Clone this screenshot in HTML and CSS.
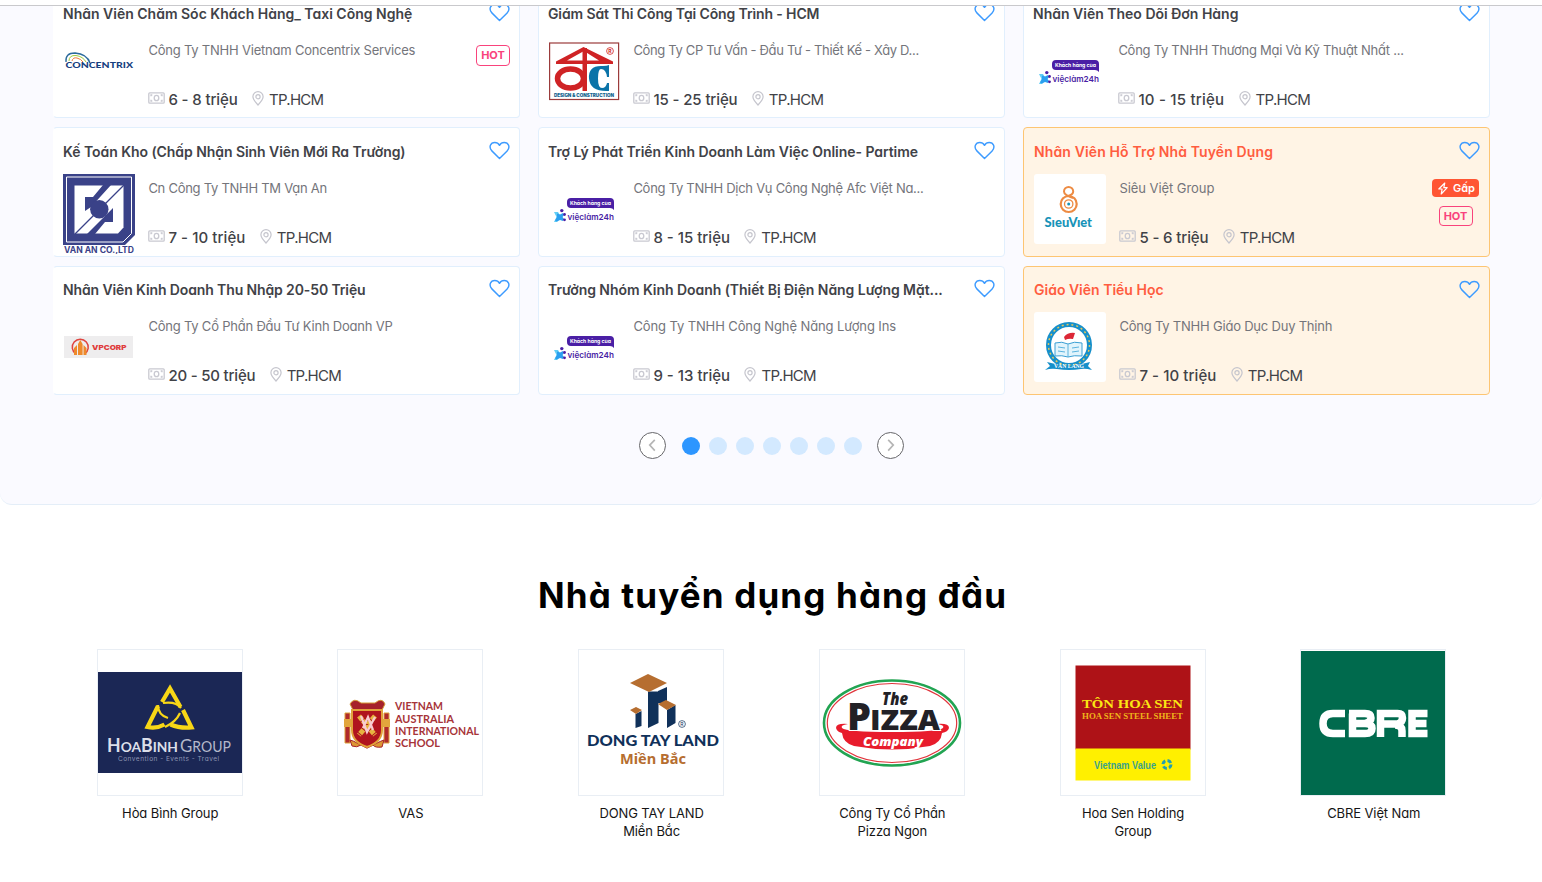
FILE: index.html
```html
<!DOCTYPE html>
<html lang="vi">
<head>
<meta charset="utf-8">
<title>Nhà tuyển dụng hàng đầu</title>
<link rel="stylesheet" href="styles.css">
</head>
<body>
<svg class="sprite" aria-hidden="true">
  <symbol id="heart" viewBox="0 0 22 19"><path d="M11 17.8 3 9.9C-.6 6.2 1.5 1.1 6.1 1.1c2.200 0 3.900 1.200 4.900 3 1-1.800 2.700-3 4.900-3 4.600 0 6.700 5.100 3.100 8.800z" fill="none" stroke="#3d9bff" stroke-width="1.500" stroke-linejoin="round"/></symbol>
  <symbol id="money" viewBox="0 0 17 12"><g fill="none" stroke="#c9c9d1" stroke-width="1.300"><rect x=".8" y=".8" width="15.400" height="10.400" rx="1"/><ellipse cx="8.500" cy="6" rx="2.300" ry="2.700"/><path d="M3 4.200V3h1.300M12.700 3H14v1.200M3 7.800V9h1.300M12.700 9H14V7.800"/></g></symbol>
  <symbol id="pin" viewBox="0 0 12 15"><g fill="none" stroke="#c5c5cd" stroke-width="1.200"><path d="M6 14C3 10.800.9 8.500.9 5.800a5.100 5.100 0 0 1 10.200 0C11.100 8.500 9 10.800 6 14z"/><circle cx="6" cy="5.700" r="2.100"/></g></symbol>
  <symbol id="vl24" viewBox="0 0 72 80">
    <path d="M23 24h39q4 0 4 4v8q-1.500-2-4-2H23q-4 0-4-4v-2q0-4 4-4z" fill="#4a1fa5"/>
    <text x="22" y="31" font-family="Inter" font-size="5.400" font-weight="700" fill="#fff" textLength="41" lengthAdjust="spacingAndGlyphs">Khách hàng của</text>
    <path d="M6 38l4 0 3 5-4 5H6l2.500-5z" fill="#60cdf5"/><path d="M9 39.500l3 1 3-1.500 1 2-1.500 2 1.500 2-1 2-3-1-3 1.500-2-1 2-3.500z" fill="#2b9fef"/>
    <circle cx="13.800" cy="36.600" r="1.700" fill="#4a1fa5"/><circle cx="16.500" cy="40.500" r="1.400" fill="#4a1fa5"/><circle cx="16.500" cy="45.800" r="1.400" fill="#4a1fa5"/>
    <text x="19.500" y="46" font-family="Inter" font-size="8.200" font-weight="600" fill="#4a1fa5" textLength="46.500" lengthAdjust="spacingAndGlyphs">việclàm24h</text>
  </symbol>
</svg>

<header class="topbar"></header>

<section class="jobs">
  <div class="job-grid">
    <article class="job">
      <div class="job-head"><h3 class="job-title">Nhân Viên Chăm Sóc Khách Hàng_ Taxi Công Nghệ</h3><svg class="heart"><use href="#heart"/></svg></div>
      <div class="job-body">
        <svg class="logo" viewBox="0 0 72 80">
          <g fill="none"><path d="M3 26q-1-9 9-9 12 1 15 10" stroke="#2a6a9c" stroke-width="1.300"/><path d="M6 25q0-6 7-5.500 7 1 10 6.500" stroke="#9ecb3c"/><path d="M9 25q1-4 5-3 4 1 6 4" stroke="#ee7b35"/></g>
          <text x="2.500" y="32" font-family="Lato" font-size="8" font-weight="900" fill="#173f7f" textLength="67.500" lengthAdjust="spacingAndGlyphs">CONCENTRIX</text>
        </svg>
        <div class="info"><p class="company tight">Công Ty TNHH Vietnam Concentrix Services</p><p class="meta"><svg class="money"><use href="#money"/></svg><b class="close">6 - 8 triệu</b><svg class="pin"><use href="#pin"/></svg><span>TP.HCM</span></p></div>
        <div class="badges single"><span class="hot">HOT</span></div>
      </div>
    </article>
    <article class="job">
      <div class="job-head"><h3 class="job-title tight">Giám Sát Thi Công Tại Công Trình - HCM</h3><svg class="heart"><use href="#heart"/></svg></div>
      <div class="job-body">
        <svg class="logo" viewBox="0 0 72 80">
          <rect x="1.600" y="7" width="69" height="56.500" fill="#fff" stroke="#9b3b3b" stroke-width="1.200"/>
          <path d="M8 25.500 35.500 11 65 25.500v2.500H8zM19 24.500h32L36 15z" fill="#cf2325" fill-rule="evenodd"/><path d="M34.500 12h4.500v43h-4.500z" fill="#cf2325"/>
          <ellipse cx="22.500" cy="42.500" rx="13" ry="9.500" fill="none" stroke="#cf2325" stroke-width="5.500"/>
          <path d="M61 29v12h-2q-1-8-6-8-3 0-3 9.500T54 52q4 0 5-5h2v8q-19 1-20-12.500T55 30q4 0 6-1z" fill="#0a73a8"/>
          <circle cx="62" cy="15" r="3.400" fill="none" stroke="#cf2325" stroke-width=".8"/><text x="60.200" y="17" font-family="Inter" font-size="5" font-weight="700" fill="#cf2325">R</text>
          <text x="6" y="61" font-family="Inter" font-size="4.200" font-weight="900" fill="#14648f" textLength="60" lengthAdjust="spacingAndGlyphs">DESIGN &amp; CONSTRUCTION</text>
        </svg>
        <div class="info"><p class="company tightest">Công Ty CP Tư Vấn - Đầu Tư - Thiết Kế - Xây D...</p><p class="meta"><svg class="money"><use href="#money"/></svg><b class="close">15 - 25 triệu</b><svg class="pin"><use href="#pin"/></svg><span>TP.HCM</span></p></div>
      </div>
    </article>
    <article class="job">
      <div class="job-head"><h3 class="job-title">Nhân Viên Theo Dõi Đơn Hàng</h3><svg class="heart"><use href="#heart"/></svg></div>
      <div class="job-body">
        <svg class="logo"><use href="#vl24"/></svg>
        <div class="info"><p class="company tighter">Công Ty TNHH Thương Mại Và Kỹ Thuật Nhất ...</p><p class="meta"><svg class="money"><use href="#money"/></svg><b class="wide">10 - 15 triệu</b><svg class="pin"><use href="#pin"/></svg><span>TP.HCM</span></p></div>
      </div>
    </article>

    <article class="job">
      <div class="job-head"><h3 class="job-title close">Kế Toán Kho (Chấp Nhận Sinh Viên Mới Ra Trường)</h3><svg class="heart"><use href="#heart"/></svg></div>
      <div class="job-body">
        <svg class="logo" viewBox="0 0 72 80">
          <path d="M0 0h72v61L62 71H0z" fill="#3a4288"/><path d="M3.500 3h65v56.500L60 68H3.500z" fill="none" stroke="#fff"/>
          <path d="M11.500 11.500h49v42L55 59.500H11.500z" fill="#fff"/>
          <path d="M22 23h8l10-12h8L28 33l-6 4zM50 34v14h-8L32 60h-8l21-21z" fill="#3a4288"/><path d="M12 60 61 11" stroke="#3a4288" stroke-width="1.200"/><circle cx="36.300" cy="35.300" r="9.200" fill="#3a4288"/>
          <text x="1" y="79" font-family="Inter" font-size="8.500" font-weight="700" fill="#3a4288" textLength="70" lengthAdjust="spacingAndGlyphs">VẠN AN CO.,LTD</text>
        </svg>
        <div class="info"><p class="company tighter">Cn Công Ty TNHH TM Vạn An</p><p class="meta"><svg class="money"><use href="#money"/></svg><b class="loose">7 - 10 triệu</b><svg class="pin"><use href="#pin"/></svg><span>TP.HCM</span></p></div>
      </div>
    </article>
    <article class="job">
      <div class="job-head"><h3 class="job-title close">Trợ Lý Phát Triển Kinh Doanh Làm Việc Online- Partime</h3><svg class="heart"><use href="#heart"/></svg></div>
      <div class="job-body">
        <svg class="logo"><use href="#vl24"/></svg>
        <div class="info"><p class="company tighter">Công Ty TNHH Dịch Vụ Công Nghệ Afc Việt Na...</p><p class="meta"><svg class="money"><use href="#money"/></svg><b>8 - 15 triệu</b><svg class="pin"><use href="#pin"/></svg><span>TP.HCM</span></p></div>
      </div>
    </article>
    <article class="job featured">
      <div class="job-head"><h3 class="job-title airy">Nhân Viên Hỗ Trợ Nhà Tuyển Dụng</h3><svg class="heart"><use href="#heart"/></svg></div>
      <div class="job-body">
        <svg class="logo" viewBox="0 0 72 80">
          <rect width="72" height="70" rx="3" fill="#fff"/>
          <circle cx="34.700" cy="30" r="8" fill="none" stroke="#ed8b43" stroke-width="2.200"/><path d="M39 24c-6-2-9-4-9-6.500a4.600 4.600 0 0 1 9.200 0c0 2-2 3.500-5 4.500" fill="none" stroke="#ed8b43" stroke-width="2"/>
          <circle cx="34.700" cy="30" r="4.200" fill="none" stroke="#ed8b43" stroke-width="1.300"/><circle cx="34.700" cy="30" r="1.500" fill="#1793b8"/>
          <text x="10.500" y="53" font-family="Lato" font-size="12.500" font-weight="900" fill="#1793b8" textLength="47.500" lengthAdjust="spacingAndGlyphs">SıeuVıet</text>
        </svg>
        <div class="info"><p class="company close">Siêu Việt Group</p><p class="meta"><svg class="money"><use href="#money"/></svg><b class="close">5 - 6 triệu</b><svg class="pin"><use href="#pin"/></svg><span>TP.HCM</span></p></div>
        <div class="badges"><span class="urgent"><svg viewBox="0 0 12 13"><path d="M7.800 1 1.800 7h3.300L4.200 12l6-6.300H6.800z" fill="none" stroke="#fff" stroke-width="1.200" stroke-linejoin="round"/></svg>Gấp</span><span class="hot">HOT</span></div>
      </div>
    </article>

    <article class="job last">
      <div class="job-head"><h3 class="job-title tight">Nhân Viên Kinh Doanh Thu Nhập 20-50 Triệu</h3><svg class="heart"><use href="#heart"/></svg></div>
      <div class="job-body">
        <svg class="logo" viewBox="0 0 72 80">
          <rect x="1" y="24" width="69" height="22" fill="#eeedee"/>
          <path d="M13 42a8 8 0 1 1 8.500 0" fill="none" stroke="#df4540" stroke-width="1.500"/><path d="M11 43v-7l3-3v10zm4 0V32l2.300-4 2.300 4v11zm5.500 0V33l3 3v7z" fill="#ee8a2c"/>
          <text x="29" y="38" font-family="Inter" font-size="6.800" font-weight="900" fill="#df3d3d" textLength="34.500" lengthAdjust="spacingAndGlyphs">VPCORP</text>
        </svg>
        <div class="info"><p class="company tight">Công Ty Cổ Phần Đầu Tư Kinh Doanh VP</p><p class="meta"><svg class="money"><use href="#money"/></svg><b class="narrow">20 - 50 triệu</b><svg class="pin"><use href="#pin"/></svg><span>TP.HCM</span></p></div>
      </div>
    </article>
    <article class="job last">
      <div class="job-head"><h3 class="job-title close">Trưởng Nhóm Kinh Doanh (Thiết Bị Điện Năng Lượng Mặt...</h3><svg class="heart"><use href="#heart"/></svg></div>
      <div class="job-body">
        <svg class="logo"><use href="#vl24"/></svg>
        <div class="info"><p class="company snug">Công Ty TNHH Công Nghệ Năng Lượng Ins</p><p class="meta"><svg class="money"><use href="#money"/></svg><b>9 - 13 triệu</b><svg class="pin"><use href="#pin"/></svg><span>TP.HCM</span></p></div>
      </div>
    </article>
    <article class="job featured last">
      <div class="job-head"><h3 class="job-title">Giáo Viên Tiểu Học</h3><svg class="heart"><use href="#heart"/></svg></div>
      <div class="job-body">
        <svg class="logo" viewBox="0 0 72 80">
          <rect width="72" height="70" rx="3" fill="#fff"/>
          <circle cx="35" cy="33" r="20.500" fill="#fff" stroke="#168fca" stroke-width="5"/><circle cx="35" cy="33" r="20.500" fill="none" stroke="#e4c75c" stroke-width="1.500" stroke-dasharray="2 3" pathLength="130"/>
          <path d="M21 31q7-2 13 1 6-3 14-1v13q-8-1-14 1-6-2-13-1z" fill="#e1f4fc" stroke="#3a9fd4"/><path d="M34 32v13M24 35l7 1M24 39l7 1M38 36l7-1M38 40l7-1" stroke="#5bb3de"/><path d="M30 25q4-5 11-4l-2 6q-4-1-8 1z" fill="#dc2736"/>
          <path d="m11 58 5-4-3-4q22 7 43 0l-2 4 4 4q-7-2-11-1-12 2-24 0-6-1-12 1z" fill="#168fca"/>
          <text x="20" y="56" font-family="Liberation Serif" font-size="5.500" font-weight="700" fill="#fff" textLength="30" lengthAdjust="spacingAndGlyphs">VĂN LANG</text>
        </svg>
        <div class="info"><p class="company tight">Công Ty TNHH Giáo Dục Duy Thịnh</p><p class="meta"><svg class="money"><use href="#money"/></svg><b class="loose">7 - 10 triệu</b><svg class="pin"><use href="#pin"/></svg><span>TP.HCM</span></p></div>
      </div>
    </article>
  </div>

  <nav class="pager">
    <button class="arrow"><svg viewBox="0 0 27 27"><path d="M16 7.500 10.500 13l5.500 6" fill="none" stroke="#b5b5b5" stroke-width="1.800"/></svg></button>
    <span class="dots"><i class="on"></i><i></i><i></i><i></i><i></i><i></i><i></i></span>
    <button class="arrow"><svg viewBox="0 0 27 27"><path d="m11 7.500 5.500 5.500-5.500 6" fill="none" stroke="#b5b5b5" stroke-width="1.800"/></svg></button>
  </nav>
</section>

<section class="top-employers">
  <h2>Nhà tuyển dụng hàng đầu</h2>
  <div class="employers">
    <figure class="employer">
      <svg class="brand" viewBox="0 0 144 145">
        <rect y="22" width="144" height="101" fill="#1b2755"/>
        <g fill="none" stroke="#f8d716" stroke-linejoin="miter"><path d="M64 52 72 38.500l10.500 18.500M60 56 49.500 77q9 2 17-2.500M85 60l8.500 17.500q-12 1-21-3" stroke-width="4.200"/><path d="M60 55q0 10 10 13M65 53q13-2 18 5M67 77q11-5 15-14" stroke-width="2.200"/></g>
        <text x="9" y="101.500" font-family="Lato" font-size="18" font-weight="700" fill="#dcdfe9" textLength="71" lengthAdjust="spacingAndGlyphs">H<tspan font-size="14">O</tspan><tspan font-size="14">A</tspan>B<tspan font-size="14">INH</tspan></text>
        <text x="82" y="101.500" font-family="Lato" font-size="18" font-weight="400" fill="#b4b8ca" textLength="51" lengthAdjust="spacingAndGlyphs">G<tspan font-size="15">ROUP</tspan></text>
        <text x="20" y="111" font-family="Inter" font-size="6.500" fill="#8f96b3" textLength="101">Convention - Events - Travel</text>
      </svg>
      <figcaption>Hòa Bình Group</figcaption>
    </figure>
    <figure class="employer">
      <svg class="brand" viewBox="0 0 144 145">
        <path d="M12 54q4-7 11-1h14q7-6 10 1l-3 6H15z" fill="#a6222b" stroke="#d69a35"/>
        <path d="M7 63h5v30H7zM46 63h5v30h-5z" fill="#b02a2c" stroke="#dda23b"/><path d="M6 69h7v8H6zM45 69h7v8h-7z" fill="#e2a63d"/>
        <path d="M12 90q4 1 7 3l10 5 10-5q4-2 7-3l-2 7q-7 1-9-2l-6 3-6-3q-4 3-9 1z" fill="#dc9734" stroke="#a6222b"/>
        <path d="M14 60h30v20q0 12-15 17-15-5-15-17z" fill="#b0141e" stroke="#e1a23a" stroke-width="2"/>
        <path d="m21 66 16 19M37 66 21 85" stroke="#e7b440" stroke-width="5" stroke-dasharray="5 1"/><path d="m23 66 6 16 8-15M25 78l5-11 5 13" fill="none" stroke="#f8cbd2" stroke-width="2.200"/>
        <g font-family="Lato" font-size="12" font-weight="700" fill="#a73439"><text x="57" y="60" textLength="48" lengthAdjust="spacingAndGlyphs">VIETNAM</text><text x="57" y="72.500" textLength="59" lengthAdjust="spacingAndGlyphs">AUSTRALIA</text><text x="57" y="85" textLength="84" lengthAdjust="spacingAndGlyphs">INTERNATIONAL</text><text x="57" y="97" textLength="45" lengthAdjust="spacingAndGlyphs">SCHOOL</text></g>
      </svg>
      <figcaption>VAS</figcaption>
    </figure>
    <figure class="employer">
      <svg class="brand" viewBox="0 0 144 145">
        <path d="M56.500 64l6-3v15l-6 2zM69 41.500h10.500V73L69 78z" fill="#10315a"/><path d="M79 41l9-4v16H79zM88 60l8.500-5v18L88 78z" fill="#10315a"/><path d="m51 33 18-9 19 9-18 9zM51 60l6-3 6 3-6 4zM79 54l8-4 10 5-9 5z" fill="#b66e30"/>
        <circle cx="103" cy="74" r="3.400" fill="none" stroke="#10315a" stroke-width=".7"/><text x="101.300" y="76" font-family="Inter" font-size="5" fill="#10315a">R</text>
        <text x="8" y="96" font-family="Lato" font-size="14.500" font-weight="900" fill="#10315a" textLength="132" lengthAdjust="spacingAndGlyphs">DONG TAY LAND</text>
        <text x="41" y="113.500" font-family="Noto Sans" font-size="15" font-weight="700" fill="#b66e30" textLength="66" lengthAdjust="spacingAndGlyphs">Miền Bắc</text>
      </svg>
      <figcaption>DONG TAY LAND<br>Miền Bắc</figcaption>
    </figure>
    <figure class="employer">
      <svg class="brand" viewBox="0 0 144 145">
        <ellipse cx="72" cy="73" rx="68" ry="42.500" fill="#fff" stroke="#22a452" stroke-width="2.600"/><ellipse cx="72" cy="73" rx="64.700" ry="39.500" fill="none" stroke="#e0343b" stroke-width="1.200"/>
        <path d="M28 74q-12-1-12 4 1 4 6 5 1 10 12 13 38 7 76 0 11-3 12-13 6-1 7-5 0-5-12-4 8 1 6 4-5 4-51 4-46 0-50-4-2-3 6-4z" fill="#e81c2c"/>
        <text x="62" y="55" font-family="Open Sans" font-size="17" font-weight="800" font-style="italic" fill="#222126" textLength="26" lengthAdjust="spacingAndGlyphs">The</text>
        <g font-family="Open Sans" font-weight="800" fill="#222126" stroke="#fff" stroke-width="2" paint-order="stroke"><text x="27" y="80" font-size="37" textLength="24" lengthAdjust="spacingAndGlyphs">P</text><text x="50" y="80" font-size="29" textLength="70" lengthAdjust="spacingAndGlyphs">IZZA</text></g>
        <text x="43" y="96" font-family="Open Sans" font-size="13" font-weight="800" font-style="italic" fill="#fff" textLength="60" lengthAdjust="spacingAndGlyphs">Company</text>
      </svg>
      <figcaption>Công Ty Cổ Phần<br>Pizza Ngon</figcaption>
    </figure>
    <figure class="employer">
      <svg class="brand" viewBox="0 0 144 145">
        <path d="M14.500 15.500h115v84h-115z" fill="#ae1217"/><path d="M14.500 98.500h115v32h-115z" fill="#fff000"/>
        <text x="21" y="58" font-family="Liberation Serif" font-size="13.500" font-weight="700" fill="#fbe613" textLength="101" lengthAdjust="spacingAndGlyphs">TÔN HOA SEN</text>
        <text x="21" y="69" font-family="Liberation Serif" font-size="8.500" font-weight="700" fill="#efb51b" textLength="101" lengthAdjust="spacingAndGlyphs">HOA SEN STEEL SHEET</text>
        <text x="33" y="118.500" font-family="Liberation Sans" font-size="11" font-weight="700" fill="#3ba28b" textLength="62" lengthAdjust="spacingAndGlyphs">Vietnam Value</text>
        <circle cx="106" cy="114.500" r="4" fill="none" stroke="#239faf" stroke-width="3" stroke-dasharray="4 2.300"/>
      </svg>
      <figcaption>Hoa Sen Holding<br>Group</figcaption>
    </figure>
    <figure class="employer">
      <svg class="brand" viewBox="0 0 144 145">
        <rect y="1" width="144" height="144" fill="#006a4d"/>
        <g fill="none" stroke="#fff" stroke-width="7.500"><path d="M44 63.500H32q-10 0-10 10t10 10h12"/><path d="M48 63.500h16q6 0 6 4.500T64 73.500H48M64 73.500q7 0 7 5t-7 5H51.500V63.500M79.500 87V63.500h17q5 0 5 4.500t-5 6H79M94 75q7 0 7 6v6M126.500 63.500H111v20h15.500M111 73.500h14.500"/></g>
      </svg>
      <figcaption>CBRE Việt Nam</figcaption>
    </figure>
  </div>
</section>
</body>
</html>
```

FILE: styles.css
```css
* { box-sizing: border-box; }
body {
  margin: 0;
  height: 882px;
  overflow: hidden;
  background: #fff;
  font-family: Inter, "Noto Sans", sans-serif;
  font-feature-settings: "cv11";
}
h2, h3, p, figure { margin: 0; }
.sprite { position: absolute; width: 0; height: 0; }
.topbar {
  position: absolute;
  top: 0; left: 0; right: 0;
  height: 6px;
  background: #fff;
  border-bottom: 1px solid #c9c9cc;
}
.jobs {
  height: 505px;
  overflow: hidden;
  background: #fafaff;
  border-bottom: 1px solid #e4eef8;
  border-radius: 0 0 12px 12px;
}
.job-grid {
  display: grid;
  grid-template-columns: repeat(3, 467px);
  grid-template-rows: 129px 130px 129px;
  gap: 9px 18px;
  margin: -11px 0 0 53px;
}
.job {
  padding: 11px 9px 0;
  background: #fff;
  border: 1px solid #e1effd;
  border-radius: 4px;
}
.job:nth-child(3n+1) { border-left-color: transparent; }
.job.last { padding-top: 10px; }
.job.featured { padding-left: 10px; background: #fff4e5; border-color: #fdc573; }
.job-head { display: flex; justify-content: space-between; height: 26px; }
.job-title { font-size: 14px; line-height: 26px; font-weight: 600; color: #414247; white-space: nowrap; }
.featured .job-title { color: #ff5d3f; }
.heart { width: 21px; height: 19px; margin-top: 2px; flex: none; }
.featured.last .heart { margin-top: 3px; }
.job-body { display: flex; margin-top: 9px; }
.logo { width: 72px; height: 80px; margin-right: 13px; flex: none; }
.info { flex: 1; min-width: 0; padding-left: 0.4px; }
.company { font-size: 13px; line-height: 28px; color: #74757b; white-space: nowrap; }
.meta { display: flex; align-items: center; height: 28px; margin-top: 21px; font-size: 15px; color: #414247; white-space: nowrap; }
.meta b { font-weight: 500; }
.meta span { letter-spacing: -0.7px; }
.money { width: 17px; height: 12px; margin: -2px 3px 0 0; }
.pin { width: 12px; height: 15px; margin: -2px 5px 0 14.3px; }

/* Tracking steps */
.job-title.close { letter-spacing: -0.055px; }
.job-title.tight { letter-spacing: -0.12px; }
.job-title.airy { letter-spacing: 0.13px; }
.company.close { letter-spacing: -0.06px; }
.company.snug { letter-spacing: -0.11px; }
.company.tight { letter-spacing: -0.21px; }
.company.tighter { letter-spacing: -0.27px; }
.company.tightest { letter-spacing: -0.34px; }
.meta .close { letter-spacing: -0.12px; }
.meta .narrow { letter-spacing: -0.2px; }
.meta .loose { letter-spacing: 0.08px; }
.meta .wide { letter-spacing: 0.22px; }

.badges { display: flex; flex-direction: column; align-items: center; gap: 9px; padding-top: 5px; }
.badges.single { padding-top: 9px; }
.featured .badges { padding-right: 1px; }
.hot { width: 34px; height: 20px; border: 1px solid #f9437c; border-radius: 4px; font-size: 11px; line-height: 18px; font-weight: 700; text-align: center; color: #f9437c; }
.single .hot { height: 21px; }
.urgent { display: flex; align-items: center; width: 47px; height: 18px; padding-left: 5px; border-radius: 4px; background: #ff5533; color: #fff; font-size: 11px; font-weight: 600; }
.urgent svg { width: 12px; height: 13px; margin-right: 4px; }
.pager { display: flex; justify-content: center; align-items: center; margin-top: 37px; height: 27px; }
.arrow { width: 27px; height: 27px; padding: 0; border: 1px solid #66666a; border-radius: 50%; background: #fff; }
.arrow svg { display: block; width: 25px; height: 25px; }
.dots { display: flex; gap: 9px; margin: 1px 15px 0 16px; }
.dots i { width: 18px; height: 18px; border-radius: 50%; background: #d3e9ff; }
.dots .on { background: #2d96ff; }
.top-employers h2 { margin-top: 66px; padding-left: 3px; font-size: 35px; line-height: 48px; font-weight: 700; letter-spacing: 1.15px; text-align: center; color: #000; }
.employers { display: grid; grid-template-columns: repeat(6, 1fr); width: 1444.3px; margin: 30px 0 0 49.35px; }
.employer { display: flex; flex-direction: column; align-items: center; }
.brand { width: 146px; height: 147px; border: 1px solid #e9eef4; }
.employer figcaption { margin-top: 8px; padding-left: 1px; font-size: 13px; line-height: 18px; letter-spacing: -0.1px; color: #151515; text-align: center; }
```
